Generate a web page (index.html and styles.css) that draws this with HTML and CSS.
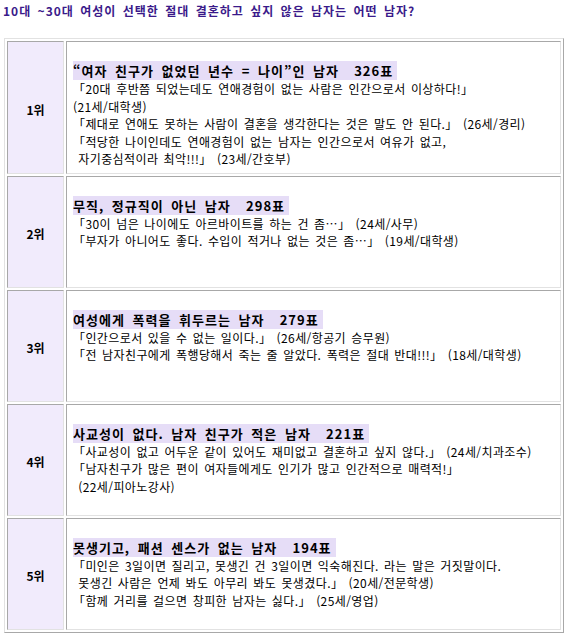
FILE: index.html
```
<!DOCTYPE html>
<html lang="ko">
<head>
<meta charset="utf-8">
<title>절대 결혼하고 싶지 않은 남자</title>
<link rel="stylesheet" href="styles.css">
</head>
<body>
<div class="page-title">10대 ~30대 여성이 선택한 절대 결혼하고 싶지 않은 남자는 어떤 남자?</div>
<table class="rank">
  <tr class="row">
    <td class="place">1위</td>
    <td class="body">
      <div class="head"><span class="mark">“여자 친구가 없었던 년수 = 나이”인 남자&nbsp;&nbsp;326표</span></div>
      <div class="line">「20대 후반쯤 되었는데도 연애경험이 없는 사람은 인간으로서 이상하다!」</div>
      <div class="line">(21세/대학생)</div>
      <div class="line">「제대로 연애도 못하는 사람이 결혼을 생각한다는 것은 말도 안 된다.」 (26세/경리)</div>
      <div class="line">「적당한 나이인데도 연애경험이 없는 남자는 인간으로서 여유가 없고,</div>
      <div class="line">&nbsp;자기중심적이라 최악!!!」 (23세/간호부)</div>
    </td>
  </tr>
  <tr class="row">
    <td class="place">2위</td>
    <td class="body">
      <div class="head"><span class="mark">무직, 정규직이 아닌 남자&nbsp;&nbsp;298표</span></div>
      <div class="line">「30이 넘은 나이에도 아르바이트를 하는 건 좀…」 (24세/사무)</div>
      <div class="line">「부자가 아니어도 좋다. 수입이 적거나 없는 것은 좀…」 (19세/대학생)</div>
    </td>
  </tr>
  <tr class="row">
    <td class="place">3위</td>
    <td class="body">
      <div class="head"><span class="mark">여성에게 폭력을 휘두르는 남자&nbsp;&nbsp;279표</span></div>
      <div class="line">「인간으로서 있을 수 없는 일이다.」 (26세/항공기 승무원)</div>
      <div class="line">「전 남자친구에게 폭행당해서 죽는 줄 알았다. 폭력은 절대 반대!!!」 (18세/대학생)</div>
    </td>
  </tr>
  <tr class="row">
    <td class="place">4위</td>
    <td class="body">
      <div class="head"><span class="mark">사교성이 없다. 남자 친구가 적은 남자&nbsp;&nbsp;221표</span></div>
      <div class="line">「사교성이 없고 어두운 같이 있어도 재미없고 결혼하고 싶지 않다.」 (24세/치과조수)</div>
      <div class="line">「남자친구가 많은 편이 여자들에게도 인기가 많고 인간적으로 매력적!」</div>
      <div class="line">&nbsp;(22세/피아노강사)</div>
    </td>
  </tr>
  <tr class="row">
    <td class="place">5위</td>
    <td class="body">
      <div class="head"><span class="mark">못생기고, 패션 센스가 없는 남자&nbsp;&nbsp;194표</span></div>
      <div class="line">「미인은 3일이면 질리고, 못생긴 건 3일이면 익숙해진다. 라는 말은 거짓말이다.</div>
      <div class="line">&nbsp;못생긴 사람은 언제 봐도 아무리 봐도 못생겼다.」 (20세/전문학생)</div>
      <div class="line">「함께 거리를 걸으면 창피한 남자는 싫다.」 (25세/영업)</div>
    </td>
  </tr>
</table>
</body>
</html>
```

FILE: styles.css
```
html, body {
  margin: 0;
  padding: 0;
  background: #ffffff;
}

body {
  font-family: "Noto Sans CJK KR", "Noto Sans", sans-serif;
  font-size: 12px;
  color: #000000;
  width: 566px;
}

.page-title {
  padding: 3px 3px 0 3px;
  font-size: 12px;
  line-height: 15px;
  font-weight: bold;
  letter-spacing: 1px;
  word-spacing: 2px;
  color: #3a1a8a;
  white-space: nowrap;
}

.rank {
  margin: 20px 0 0 4px;
  width: 560px;
  border-collapse: separate;
  border-spacing: 2px;
  border: 1px solid;
  border-color: #e2e2e2 #a8a8a8 #a8a8a8 #e2e2e2;
  table-layout: fixed;
}

.row {
  height: 112px;
}

.place,
.body {
  border: 1px solid;
  border-color: #a8a8a8 #e2e2e2 #e2e2e2 #a8a8a8;
  padding: 0;
}

.place {
  width: 55px;
  background: #f1ebfc;
  text-align: center;
  vertical-align: middle;
  font-weight: bold;
  font-size: 12px;
  padding-top: 4px;
}

.body {
  vertical-align: top;
  padding: 19px 4px 5px 6px;
  white-space: nowrap;
}

.head {
  font-size: 13px;
  line-height: 19px;
  font-weight: bold;
  letter-spacing: 1px;
  word-spacing: 3px;
}

.mark {
  background: #e6ddf7;
  padding-right: 4px;
}

.line {
  line-height: 17.5px;
  font-size: 12px;
  letter-spacing: 0.4px;
  word-spacing: 1.5px;
}
```
